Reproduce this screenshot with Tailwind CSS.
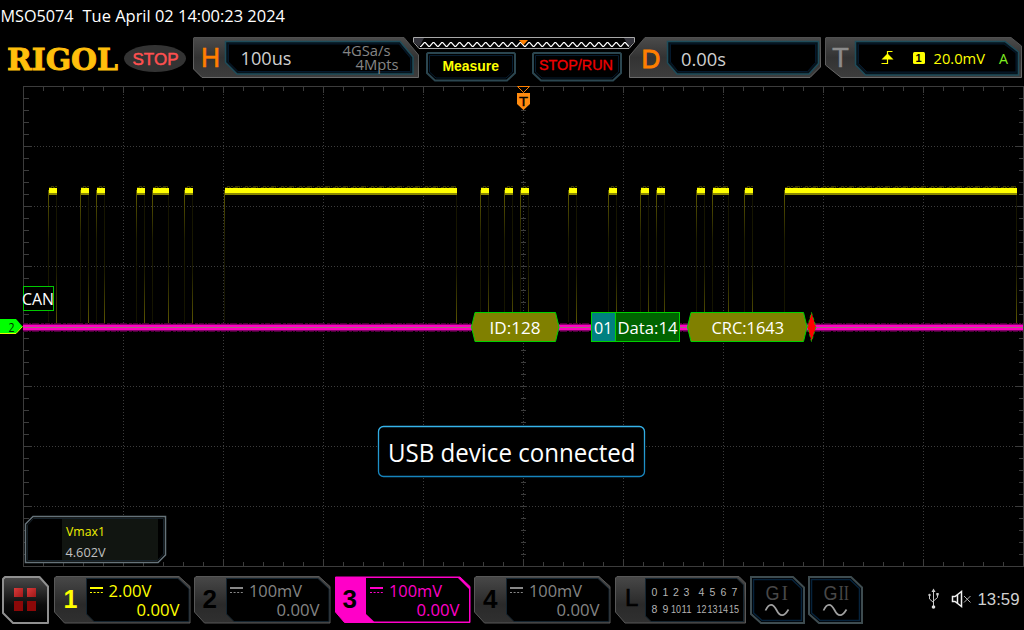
<!DOCTYPE html>
<html lang="en">
<head>
<meta charset="utf-8">
<title>MSO5074</title>
<script src="https://cdn.jsdelivr.net/npm/@tailwindcss/browser@4"></script>
</head>
<body class="w-[1024px] h-[630px] bg-black overflow-hidden flex flex-col font-['Open_Sans','Noto_Sans',sans-serif]">
<svg class="absolute size-0" aria-hidden="true">
  <defs>
    <linearGradient id="metal" x1="0" y1="0" x2="0" y2="1"><stop offset="0" stop-color="#4b4b4b"/><stop offset=".5" stop-color="#333"/><stop offset="1" stop-color="#3d3d3d"/></linearGradient>
    <linearGradient id="edge" x1="0" y1="0" x2="0" y2="1"><stop offset="0" stop-color="#505050"/><stop offset="1" stop-color="#6a6a6a"/></linearGradient>
    <linearGradient id="dim" x1="0" y1="0" x2="0" y2="1"><stop offset="0" stop-color="#484848"/><stop offset=".6" stop-color="#2a2a2a"/><stop offset="1" stop-color="#303030"/></linearGradient>
    <linearGradient id="btn" x1="0" y1="0" x2="0" y2="1"><stop offset="0" stop-color="#4a4a4a"/><stop offset=".6" stop-color="#0c0c0c"/><stop offset="1" stop-color="#000"/></linearGradient>
    <linearGradient id="red" x1="0" y1="0" x2="1" y2="1"><stop offset="0" stop-color="#d83a3a"/><stop offset="1" stop-color="#a01818"/></linearGradient>
    <linearGradient id="pop" x1="0" y1="0" x2="0" y2="1"><stop offset="0" stop-color="#36b4ea"/><stop offset="1" stop-color="#1684bd"/></linearGradient>
    <linearGradient id="fall" gradientUnits="userSpaceOnUse" x1="0" y1="195" x2="0" y2="323"><stop offset="0" stop-color="#141300"/><stop offset=".6" stop-color="#1c1b00"/><stop offset="1" stop-color="#5a5500"/></linearGradient>
    <linearGradient id="rise" gradientUnits="userSpaceOnUse" x1="0" y1="195" x2="0" y2="323"><stop offset="0" stop-color="#5a5500"/><stop offset=".35" stop-color="#1c1b00"/><stop offset="1" stop-color="#141300"/></linearGradient>
  </defs>
</svg>

<!-- Model and clock -->
<div class="h-9 shrink-0">
  <svg class="block" width="1024" height="36">
    <g class="text-[16.500px] fill-white">
      <text x="0.500" y="22" textLength="73" lengthAdjust="spacingAndGlyphs">MSO5074</text>
      <text x="82.500" y="22" textLength="202.500" lengthAdjust="spacingAndGlyphs">Tue April 02 14:00:23 2024</text>
    </g>
  </svg>
</div>

<!-- Top bar -->
<header class="h-[50px] shrink-0 flex">
  <svg class="block shrink-0" width="193" height="50" viewBox="0 36 193 50">
    <text x="7" y="69.500" textLength="111" lengthAdjust="spacingAndGlyphs" stroke="#ffbf0c" stroke-width=".9" class="font-['DejaVu_Serif',serif] font-bold text-[30px] fill-[#ffbf0c]">RIGOL</text>
    <ellipse cx="155" cy="58.500" rx="31" ry="13.500" fill="#333"/>
    <text x="132.500" y="65" textLength="46" lengthAdjust="spacingAndGlyphs" stroke="#ff5050" stroke-width=".5" class="font-['Liberation_Sans',sans-serif] text-[17px] fill-[#ff5050]">STOP</text>
  </svg>

  <svg class="block shrink-0" width="226" height="50" viewBox="193 36 226 50">
    <path d="M194 37.500H404L418.500 55V77.500H202L193.500 69V38Z" fill="url(#metal)" stroke="url(#edge)"/>
    <path d="M225.500 41.500H400L413 57V74H237L225.500 62.500Z" fill="#07131b" stroke="#1e4c5a" stroke-width="1.500"/>
    <path d="M228.500 44H399L410.500 58V71.500H238L228.500 62Z" fill="#000" stroke="#04182c"/>
    <text x="201" y="67" class="font-['Liberation_Sans',sans-serif] text-[27px] fill-[#ff7f00]" stroke="#ff7f00" stroke-width=".6" textLength="19" lengthAdjust="spacingAndGlyphs">H</text>
    <text x="240.500" y="65" textLength="51" lengthAdjust="spacingAndGlyphs" class="text-[18.500px] fill-[#d0d0d0]">100us</text>
    <text x="342.500" y="56" textLength="48" lengthAdjust="spacingAndGlyphs" class="text-[14.500px] fill-[#858585]">4GSa/s</text>
    <text x="355.500" y="70" textLength="43" lengthAdjust="spacingAndGlyphs" class="text-[14.500px] fill-[#858585]">4Mpts</text>
  </svg>

  <!-- Memory strip and keys -->
  <svg class="block shrink-0 -mx-1.5" width="222" height="50" viewBox="413 36 222 50">
    <path d="M413.500 37.500H634.500V42L629 48.500H419L413.500 42Z" fill="#000" stroke="#a8a8a8"/>
    <path d="M414 38H424L419 47L414 42ZM634 38H624L629 47L634 42Z" fill="#33333b"/>
    <path id="zig" d="" fill="none" stroke="#fff" stroke-width="1.200"/>
    <path d="M519 40H528L523.500 45Z" fill="#ff8000"/>
    <g fill="#000" stroke="#2b4650" stroke-width="2">
      <path d="M428 53H514L515 54V73L507 80.500H435L427 73V54Z"/>
      <path d="M534 53H620L621 54V73L613 80.500H541L533 73V54Z"/>
    </g>
    <g fill="none" stroke="#061c30">
      <path d="M429.500 55.500H512.500V72L506 78H436L429.500 72Z"/>
      <path d="M535.500 55.500H618.500V72L612 78H542L535.500 72Z"/>
    </g>
    <text x="442.500" y="71" textLength="56.500" lengthAdjust="spacingAndGlyphs" class="font-['Liberation_Sans',sans-serif] font-bold text-[14.500px] fill-[#ffff00]">Measure</text>
    <text x="539" y="70" textLength="74" lengthAdjust="spacingAndGlyphs" stroke="#f00000" stroke-width=".3" class="font-['Liberation_Sans',sans-serif] text-[14px] fill-[#f00000]">STOP/RUN</text>
  </svg>

  <svg class="block shrink-0" width="192" height="50" viewBox="629 36 192 50">
    <path d="M645 37.500H820.500V67L810 77.500H629.500V56Z" fill="url(#metal)" stroke="url(#edge)"/>
    <path d="M667.500 41.500H818.500V63.500L809 74H677L667.500 63Z" fill="#07131b" stroke="#1e4c5a" stroke-width="1.500"/>
    <path d="M670.500 44H815.500V62.500L807.500 71.500H678L670.500 62Z" fill="#000" stroke="#04182c"/>
    <text x="641.500" y="67.500" class="font-['Liberation_Sans',sans-serif] text-[26px] fill-[#ff7f00]" stroke="#ff7f00" stroke-width=".9">D</text>
    <text x="681" y="66" textLength="45" lengthAdjust="spacingAndGlyphs" class="text-[18.500px] fill-[#d0d0d0]">0.00s</text>
  </svg>

  <svg class="block shrink-0 ml-1" width="198" height="50" viewBox="825 36 198 50">
    <path d="M826 37.500H1011L1021.500 46V77.500H841L825.500 65V38Z" fill="url(#metal)" stroke="url(#edge)"/>
    <path d="M855.500 41.500H1005L1018.500 52V75H865.500L855.500 65Z" fill="#07131b" stroke="#1e4c5a" stroke-width="1.500"/>
    <path d="M858.500 44H1004L1016 53V72H867L858.500 63.500Z" fill="#000" stroke="#04182c"/>
    <text x="832" y="66.500" textLength="17" lengthAdjust="spacingAndGlyphs" stroke="#8c8c8c" stroke-width=".4" class="font-['Liberation_Sans',sans-serif] text-[27.500px] fill-[#8c8c8c]">T</text>
    <path d="M881.500 63.500H887.500V51.500H892.500" fill="none" stroke="#ffff00" stroke-width="1.200"/>
    <path d="M887.500 53.500L893.500 59.500H881.500Z" fill="#ffff00"/>
    <rect x="913" y="52" width="12" height="12" rx="1.500" fill="#ffff00"/>
    <text x="915.500" y="62" class="font-['Liberation_Sans',sans-serif] font-bold text-[11px] fill-black">1</text>
    <text x="933.500" y="64" textLength="51.500" lengthAdjust="spacingAndGlyphs" class="text-[15px] fill-[#ffff00]">20.0mV</text>
    <text x="999" y="64" textLength="9" lengthAdjust="spacingAndGlyphs" class="text-[14px] fill-[#80f020]">A</text>
  </svg>
</header>

<!-- Graticule, traces, decode bus -->
<main class="h-[486px] shrink-0">
  <svg class="block" width="1024" height="486" viewBox="0 86 1024 486">
    <g shape-rendering="crispEdges" fill="none" stroke="#3c3c3c">
      <path d="M23 86.500H1024M23 566.500H1024M23.500 86V567M1023.500 86V567"/>
      <path d="M25 146.500H1023M25 206.500H1023M25 266.500H1023M25 326.500H1023M25 386.500H1023M25 446.500H1023M25 506.500H1023" stroke-dasharray="1 2"/>
      <path d="M123.500 88V566M223.500 88V566M323.500 88V566M423.500 88V566M523.500 88V566M623.500 88V566M723.500 88V566M823.500 88V566M923.500 88V566" stroke-dasharray="1 2"/>
      <path d="M23 89H1024M23 564H1024" stroke-width="4" stroke-dasharray="1 19"/>
      <path d="M23 90H1024M23 563H1024" stroke-width="6" stroke-dasharray="1 99"/>
      <path d="M26 86V567M1021 86V567M523.500 86V567" stroke-width="5" stroke-dasharray="1 11"/>
      <path d="M27.500 86V567M1019.500 86V567" stroke-width="7" stroke-dasharray="1 59"/>
    </g>

    <path id="falls" d="" stroke="url(#fall)" shape-rendering="crispEdges"/>
    <path id="rises" d="" stroke="url(#rise)" shape-rendering="crispEdges"/>
    <path id="fuzz" d="" stroke="#3c3a00" stroke-dasharray="3 1 2 2 5 1 1 3" shape-rendering="crispEdges"/>
    <path id="haloY" d="" stroke="#8a8700" stroke-width="7" shape-rendering="crispEdges"/>
    <path id="highs" d="" stroke="#ffff00" stroke-width="5" shape-rendering="crispEdges"/>

    <g shape-rendering="crispEdges">
      <path d="M23 327.500H1023" stroke="#4c003a" stroke-width="9" stroke-dasharray="5 1 2 1 7 2 3 1"/>
      <path d="M23 327.500H1023" stroke="#86006a" stroke-width="7"/>
      <path d="M23 327.500H1023" stroke="#ff00c4" stroke-width="5"/>
      <path d="M23 327.500H1023" stroke="#a06a78"/>
    </g>

    <path d="M517.500 86.500H529.500L523.500 92.500Z" fill="#000" stroke="#ff8000"/>
    <path d="M517 93H530V104L523.500 110L517 104Z" fill="#ff8c10"/>
    <text x="519" y="106" textLength="9" lengthAdjust="spacingAndGlyphs" class="font-['Liberation_Sans',sans-serif] text-[13px] fill-black" stroke="#000" stroke-width=".3">T</text>

    <path d="M0 319H16L22.500 326.500L16 333.500H0Z" fill="#00ff00"/>
    <path d="M0 333.500H16L22.500 326.500" fill="none" stroke="#e0ff00"/>
    <text x="8.500" y="331.500" textLength="6" lengthAdjust="spacingAndGlyphs" class="text-[12.500px] fill-[#002800]">2</text>

    <rect x="23.500" y="286.500" width="30" height="24" fill="#000" stroke="#00c800"/>
    <text x="22" y="305" textLength="32" lengthAdjust="spacingAndGlyphs" class="text-[16.500px] fill-white">CAN</text>

    <path d="M559 327.500H591.500M679.500 327.500H687.500" stroke="#a06a78"/>
    <g stroke="#00d000">
      <path d="M475 312.500H555.500L559 327L555.500 341.500H475L471.500 327Z" fill="#808000"/>
      <rect x="615.500" y="312.500" width="64" height="29" fill="#006400"/>
      <rect x="591.500" y="312.500" width="24" height="29" fill="#008080"/>
      <path d="M691 312.500H803.500L807 327L803.500 341.500H691L687.500 327Z" fill="#808000"/>
    </g>
    <path d="M811.500 312.500L816 327L811.500 341.500L807.500 327Z" fill="#ff0000" stroke="#00d000" stroke-width=".8" stroke-dasharray="3 2"/>
    <g class="text-[16.500px] fill-white">
      <text x="489.500" y="334" textLength="51" lengthAdjust="spacingAndGlyphs">ID:128</text>
      <text x="594" y="334" textLength="18.500" lengthAdjust="spacingAndGlyphs">01</text>
      <text x="617.500" y="334" textLength="60" lengthAdjust="spacingAndGlyphs">Data:14</text>
      <text x="711.500" y="334" textLength="72.500" lengthAdjust="spacingAndGlyphs">CRC:1643</text>
    </g>

    <!-- Message -->
    <rect x="378.500" y="426.500" width="266" height="50" rx="5" fill="#000" stroke="url(#pop)" stroke-width="1.300"/>
    <text x="388" y="462" textLength="247.500" lengthAdjust="spacingAndGlyphs" class="text-[25px] fill-white">USB device connected</text>

    <!-- Measurement -->
    <path d="M33 516.500H165.500V555L158 562.500H25.500V524Z" fill="#000" stroke="#66737a" stroke-width="1.500"/>
    <path d="M33.500 518.500H163.500V554L157.500 560.500H27.500V525Z" fill="none" stroke="#16222a"/>
    <rect x="62" y="519" width="96" height="41" fill="#111511"/>
    <text x="66" y="536" textLength="39" lengthAdjust="spacingAndGlyphs" class="text-[13px] fill-[#f0f000]">Vmax1</text>
    <text x="65.500" y="557" textLength="40" lengthAdjust="spacingAndGlyphs" class="text-[13px] fill-[#c0c0c0]">4.602V</text>
  </svg>
</main>

<!-- Bottom bar -->
<footer class="h-[58px] shrink-0 flex">
  <svg class="block shrink-0" width="54" height="58" viewBox="0 572 54 58">
    <path d="M5 577H39.500L48 586.500V623H13L3 613V579Z" fill="url(#btn)" stroke="#909090" stroke-width="2" stroke-linejoin="round"/>
    <g fill="url(#red)"><path d="M14 588H23V597H14Z"/><path d="M27 588H36V597H27Z"/></g>
    <path d="M14 601H23V611H14ZM27 601H36V611H27Z" fill="#8c0808"/>
  </svg>

  <svg class="block shrink-0" width="140" height="58" viewBox="54 572 140 58">
    <path d="M56 576.500H179L190 586.500V623H64.500L54.500 612V578Z" fill="url(#dim)" stroke="#585858"/>
    <path d="M86.500 578.500H178L189 589V621.500H94L86.500 614Z" fill="#000" stroke="#152530"/>
    <text x="63.500" y="607.500" class="font-['Liberation_Sans',sans-serif] font-bold text-[25px] fill-[#ffff00]">1</text>
    <path d="M90 588H103" stroke="#ffff00" stroke-width="2"/><path d="M90 592.500H103" stroke="#ffff00" stroke-dasharray="2 1.600"/>
    <g class="text-[16.800px] fill-[#ffff00]"><text x="108.500" y="597" textLength="43" lengthAdjust="spacingAndGlyphs">2.00V</text><text x="136.500" y="616" textLength="43" lengthAdjust="spacingAndGlyphs">0.00V</text></g>
  </svg>

  <svg class="block shrink-0" width="140" height="58" viewBox="194 572 140 58">
    <path d="M196 576.500H319L330 586.500V623H204.500L194.500 612V578Z" fill="url(#dim)" stroke="#585858"/>
    <path d="M226.500 578.500H318L329 589V621.500H234L226.500 614Z" fill="#000" stroke="#152530"/>
    <text x="202.500" y="608" class="font-['Liberation_Sans',sans-serif] font-bold text-[26px] fill-black">2</text>
    <path d="M230 588H243" stroke="#888" stroke-width="2"/><path d="M230 592.500H243" stroke="#888" stroke-dasharray="2 1.600"/>
    <g class="text-[16.800px] fill-[#848484]"><text x="249" y="597" textLength="53" lengthAdjust="spacingAndGlyphs">100mV</text><text x="276.500" y="616" textLength="43" lengthAdjust="spacingAndGlyphs">0.00V</text></g>
  </svg>

  <svg class="block shrink-0" width="140" height="58" viewBox="334 572 140 58">
    <path d="M335.500 577H460L470 586.500V622.500H344.500L335.500 612Z" fill="#ff00c8" stroke="#ff00c8"/>
    <path d="M366 578H458L469 589V621.500H374L366 614Z" fill="#000"/>
    <text x="342.500" y="608" class="font-['Liberation_Sans',sans-serif] font-bold text-[26px] fill-black">3</text>
    <path d="M370 588H383" stroke="#ff00c8" stroke-width="2"/><path d="M370 592.500H383" stroke="#ff00c8" stroke-dasharray="2 1.600"/>
    <g class="text-[16.800px] fill-[#ff00c8]"><text x="389" y="597" textLength="53" lengthAdjust="spacingAndGlyphs">100mV</text><text x="416.500" y="616" textLength="43" lengthAdjust="spacingAndGlyphs">0.00V</text></g>
  </svg>

  <svg class="block shrink-0" width="140" height="58" viewBox="474 572 140 58">
    <path d="M476 576.500H599L610 586.500V623H484.500L474.500 612V578Z" fill="url(#dim)" stroke="#585858"/>
    <path d="M506.500 578.500H598L609 589V621.500H514L506.500 614Z" fill="#000" stroke="#152530"/>
    <text x="483" y="608" class="font-['Liberation_Sans',sans-serif] font-bold text-[26px] fill-black">4</text>
    <path d="M510 588H523" stroke="#888" stroke-width="2"/><path d="M510 592.500H523" stroke="#888" stroke-dasharray="2 1.600"/>
    <g class="text-[16.800px] fill-[#848484]"><text x="529" y="597" textLength="53" lengthAdjust="spacingAndGlyphs">100mV</text><text x="556.500" y="616" textLength="43" lengthAdjust="spacingAndGlyphs">0.00V</text></g>
  </svg>

  <svg class="block shrink-0" width="134" height="58" viewBox="614 572 134 58">
    <path d="M617 576.500H739L745.500 583V623H625L615.500 612V578Z" fill="url(#dim)" stroke="#585858"/>
    <path d="M645.500 578.500H737L743.500 585V621.500H651L645.500 616Z" fill="#000" stroke="#152530"/>
    <text x="625" y="605.500" class="font-['Liberation_Sans',sans-serif] text-[24px] fill-black" stroke="#000" stroke-width=".6">L</text>
    <g class="font-['Liberation_Sans',sans-serif] text-[10.500px] fill-[#b4b4b4]" text-anchor="middle">
      <text x="654.500" y="596">0</text><text x="665.500" y="596">1</text><text x="676" y="596">2</text><text x="686.500" y="596">3</text><text x="701.500" y="596">4</text><text x="712.500" y="596">5</text><text x="723.500" y="596">6</text><text x="734.500" y="596">7</text>
      <text x="654.500" y="613">8</text><text x="665.500" y="613">9</text><text x="676" y="613" textLength="10" lengthAdjust="spacingAndGlyphs">10</text><text x="686.500" y="613" textLength="10" lengthAdjust="spacingAndGlyphs">11</text><text x="701.500" y="613" textLength="10" lengthAdjust="spacingAndGlyphs">12</text><text x="712.500" y="613" textLength="10" lengthAdjust="spacingAndGlyphs">13</text><text x="723" y="613" textLength="10" lengthAdjust="spacingAndGlyphs">14</text><text x="734" y="613" textLength="10" lengthAdjust="spacingAndGlyphs">15</text>
    </g>
  </svg>

  <svg class="block shrink-0" width="118" height="58" viewBox="748 572 118 58">
    <g fill="#000" stroke="#3e4c50" stroke-width="2"><path d="M751 577H793L804 587.500V623H761L751 614Z"/><path d="M809 577H851L862 587.500V623H819L809 614Z"/></g>
    <g fill="none" stroke="#06233c" stroke-width="1.500"><path d="M753.500 579.500H792L801.500 588.500V620.500H762L753.500 613Z"/><path d="M811.500 579.500H850L859.500 588.500V620.500H820L811.500 613Z"/></g>
    <g class="font-['Liberation_Sans',sans-serif] text-[20px] fill-[#484848]"><text x="765.500" y="600" textLength="14" lengthAdjust="spacingAndGlyphs">G</text><text x="823.500" y="600" textLength="14" lengthAdjust="spacingAndGlyphs">G</text></g>
    <g class="font-['Liberation_Serif',serif] text-[21px] fill-[#484848]"><text x="781.500" y="600" textLength="6.500" lengthAdjust="spacingAndGlyphs">I</text><text x="838.500" y="600" textLength="10.500" lengthAdjust="spacingAndGlyphs">II</text></g>
    <g fill="none" stroke="#a0a0a0" stroke-width="1.700"><path d="M765.500 610.500C769 603 773 603 776.500 610S784 617 788.500 609.500"/><path d="M823.500 610.500C827 603 831 603 834.500 610S842 617 846.500 609.500"/></g>
  </svg>

  <svg class="block shrink-0" width="158" height="58" viewBox="866 572 158 58">
    <g fill="none" stroke="#c8c8c8"><path d="M933.500 591V606M929.500 594V599L933.500 602.500M937.500 594V597.500L933.500 601"/></g>
    <path d="M933.500 588.500L935.500 592H931.500Z" fill="#c8c8c8"/><circle cx="933.500" cy="607" r="1.800" fill="#e0e0e0"/>
    <circle cx="929.500" cy="595" r="1.200" fill="#c8c8c8"/><rect x="936.300" y="593" width="2.400" height="2.400" fill="#c8c8c8"/>
    <path d="M952.500 596.500H955L961.500 591.500V606.500L955 601.500H952.500V596.500ZM957.500 595V603" fill="none" stroke="#f0f0f0" stroke-width="1.500"/>
    <path d="M964 596L970.500 602.500M970.500 596L964 602.500" stroke="#b4b4b4"/>
    <text x="977.500" y="605" textLength="42" lengthAdjust="spacingAndGlyphs" class="font-['Liberation_Sans',sans-serif] text-[16.500px] fill-[#d0d0d0]">13:59</text>
  </svg>
</footer>

<script>
  // High intervals of the CAN signal, in screen pixels
  const highs = [[49,57],[81,89],[97,105],[137,145],[153,169],[185,193],[225,457],[481,489],[505,513],[521,529],[569,577],[609,617],[641,649],[657,665],[697,705],[713,729],[745,753],[785,1017]];
  const set = (id, d) => document.getElementById(id).setAttribute('d', d);
  set('highs', highs.map(([a, b]) => `M${a} 190.5H${b}`).join(''));
  set('haloY', highs.map(([a, b]) => `M${a} 191.5H${b}`).join(''));
  set('fuzz', highs.map(([a, b]) => `M${a} 187.5H${b}M${a + 2} 186.5H${b}`).join(''));
  set('rises', highs.map(([a]) => `M${a - 0.5} 190V322`).join(''));
  set('falls', highs.map(([, b]) => `M${b - 0.5} 190V323`).join(''));
  let z = 'M420 46.5';
  for (let x = 420; x < 626; x += 8.7) z += `L${x + 1} 46.5L${x + 4.3} 42.5H${x + 5.3}L${x + 8.7} 46.5`;
  set('zig', z);
</script>
</body>
</html>
